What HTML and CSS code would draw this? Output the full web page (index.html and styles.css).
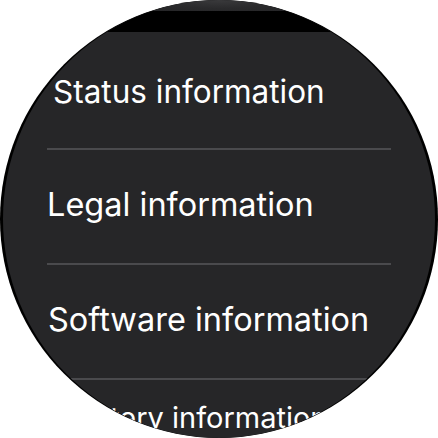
FILE: index.html
```html
<!DOCTYPE html>
<html lang="en">
<head>
<meta charset="utf-8">
<title>About watch</title>
<link rel="stylesheet" href="styles.css">
</head>
<body>
<div class="watch">
  <div class="screen">
    <div class="top-edge"></div>
    <div class="time-bar"></div>
    <ul class="list">
      <li class="item item-status">Status information</li>
      <li class="item item-legal">Legal information</li>
      <li class="item item-software">Software information</li>
      <li class="item item-battery">Battery information</li>
    </ul>
  </div>
</div>
</body>
</html>
```
FILE: styles.css
```css
html, body {
  margin: 0;
  padding: 0;
  background: #ffffff;
}

.watch {
  width: 438px;
  height: 438px;
  border-radius: 50%;
  background: #000000;
  overflow: hidden;
  display: flex;
  justify-content: center;
}

.screen {
  width: 432px;
  height: 438px;
  border-radius: 50%;
  background: #262628;
  overflow: hidden;
  display: flex;
  flex-direction: column;
}

.top-edge {
  height: 11px;
  flex: none;
  background: radial-gradient(ellipse 90px 14px at 50% 0, #3a3a3c 0%, #2a2a2c 60%, #262628 100%);
}

.time-bar {
  height: 21px;
  flex: none;
  background: #000000;
}

.list {
  list-style: none;
  margin: 0;
  padding: 0 44px;
  display: flex;
  flex-direction: column;
}

.item {
  font-family: Inter, "Noto Sans", sans-serif;
  font-size: 32.5px;
  line-height: 40px;
  color: #ffffff;
  white-space: nowrap;
  border-top: 2px solid #4a4a4d;
}

.item-status {
  border-top: none;
  font-size: 31.5px;
  padding: 40px 0 36px 6px;
}

.item-legal {
  padding: 35px 0 38px 0;
}

.item-software {
  padding: 35px 0 38px 1px;
}

.item-battery {
  font-size: 29px;
  padding: 18px 0 0 19px;
}
```
